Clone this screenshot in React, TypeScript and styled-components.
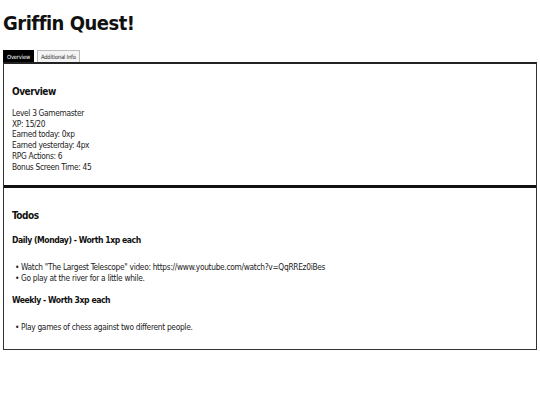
import styled, { createGlobalStyle } from "styled-components";

const FONT = `"DejaVu Sans Condensed", "DejaVu Sans", sans-serif`;

const GlobalStyle = createGlobalStyle`
  html, body {
    margin: 0;
    padding: 0;
    background: #ffffff;
  }
  body {
    font-family: ${FONT};
    color: #111;
  }
`;

const Page = styled.div`
  padding: 11px 3px 0 3px;
`;

const Title = styled.h1`
  margin: 0 0 15px 0;
  font-size: 20px;
  line-height: 24px;
  font-weight: bold;
  letter-spacing: -0.5px;
`;

const TabBar = styled.div`
  display: flex;
  gap: 3px;
  align-items: flex-end;
  height: 12px;
`;

const Tab = styled.button<{ $active?: boolean }>`
  font-family: ${FONT};
  font-size: 5.8px;
  letter-spacing: -0.2px;
  height: 12px;
  padding: 0 3px;
  margin: 0;
  border: 1px solid ${(p) => (p.$active ? "#000" : "#bbb")};
  border-bottom: none;
  background: ${(p) => (p.$active ? "#000" : "#f4f4f4")};
  color: ${(p) => (p.$active ? "#fff" : "#333")};
  cursor: pointer;
`;

const Panel = styled.div`
  border: 1px solid #333;
  border-top: 2px solid #222;
`;

const Section = styled.section<{ $divider?: boolean }>`
  padding: 21px 8px ${(p) => (p.$divider ? "16px" : "13px")} 8px;
  border-top: ${(p) => (p.$divider ? "3px solid #111" : "none")};
`;

const Heading = styled.h2<{ $gap: number }>`
  margin: 0 0 ${(p) => p.$gap}px 0;
  font-size: 10px;
  line-height: 14px;
  font-weight: bold;
  letter-spacing: -0.45px;
`;

const SubHeading = styled.h3`
  margin: 0 0 16px 0;
  font-size: 8.6px;
  line-height: 12px;
  font-weight: bold;
  letter-spacing: -0.45px;
`;

const Stats = styled.div`
  font-size: 8.3px;
  line-height: 10.7px;
  letter-spacing: -0.32px;
  color: #222;
`;

const List = styled.ul`
  margin: 0 0 11px 0;
  padding-left: 9px;
  font-size: 8.3px;
  line-height: 10.5px;
  letter-spacing: -0.3px;
  color: #222;
  list-style: none;
  &:last-child {
    margin-bottom: 0;
  }
`;

const Item = styled.li`
  position: relative;
  &::before {
    content: "•";
    position: absolute;
    left: -6px;
  }
`;

const stats = [
  "Level 3 Gamemaster",
  "XP: 15/20",
  "Earned today: 0xp",
  "Earned yesterday: 4px",
  "RPG Actions: 6",
  "Bonus Screen Time: 45",
];

export default function App() {
  return (
    <>
      <GlobalStyle />
      <Page>
        <Title>Griffin Quest!</Title>
        <TabBar>
          <Tab $active>Overview</Tab>
          <Tab>Additional Info</Tab>
        </TabBar>
        <Panel>
          <Section>
            <Heading $gap={9}>Overview</Heading>
            <Stats>
              {stats.map((s) => (
                <div key={s}>{s}</div>
              ))}
            </Stats>
          </Section>
          <Section $divider>
            <Heading $gap={11}>Todos</Heading>
            <SubHeading>Daily (Monday) - Worth 1xp each</SubHeading>
            <List>
              <Item>
                Watch "The Largest Telescope" video:
                https://www.youtube.com/watch?v=QqRREz0iBes
              </Item>
              <Item>Go play at the river for a little while.</Item>
            </List>
            <SubHeading>Weekly - Worth 3xp each</SubHeading>
            <List>
              <Item>Play games of chess against two different people.</Item>
            </List>
          </Section>
        </Panel>
      </Page>
    </>
  );
}
